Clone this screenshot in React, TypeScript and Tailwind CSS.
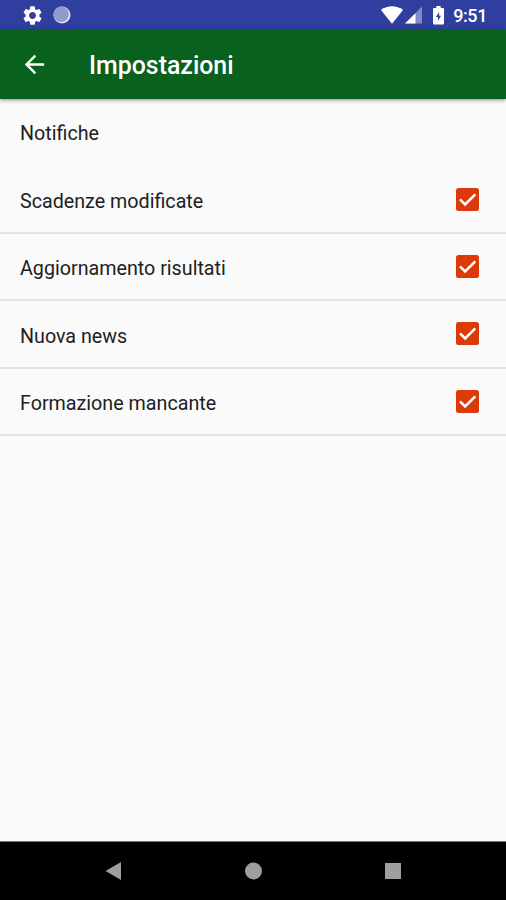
import { MdArrowBack, MdSettings } from 'react-icons/md';

const notifications = [
  { name: 'Scadenze modificate', checked: true },
  { name: 'Aggiornamento risultati', checked: true },
  { name: 'Nuova news', checked: true },
  { name: 'Formazione mancante', checked: true },
];

function StatusBar() {
  return (
    <div className="flex h-[30px] shrink-0 items-center bg-[#303f9f] pr-[19px] pl-[21px] text-white">
      <MdSettings className="h-[23px] w-[23px]" />
      <svg className="ml-[9px] h-[18px] w-[18px]" viewBox="0 0 18 18">
        <circle cx="9" cy="9" r="8.5" fill="#dfe2f3" />
        <circle cx="8.2" cy="8.2" r="7.7" fill="#929bce" />
      </svg>

      <svg className="ml-auto h-[18px] w-[22px]" viewBox="0 0 22 18" fill="currentColor">
        <path d="M0 4C6.2-1 15.800-1 22 4L11 17.700z" />
      </svg>
      <svg className="ml-[2px] h-[18px] w-[17px]" viewBox="0 0 17 18" fill="currentColor">
        <path d="M17 .5v17H0z" opacity=".4" />
        <path d="M10.500 7.200v10.300H0z" />
      </svg>
      <svg className="ml-[11px] h-[19px] w-[11px]" viewBox="0 0 11 19">
        <path
          d="M3.300 0h4.400v2H10a1 1 0 0 1 1 1v14.500a1 1 0 0 1-1 1H1a1 1 0 0 1-1-1V3a1 1 0 0 1 1-1h2.300z"
          fill="#fff"
        />
        <path d="M6.100 6L3 11h2v3.700L8 9.700H6.100z" fill="#303f9f" />
      </svg>
      <span className="ml-[9px] pt-[2px] text-[18px] leading-none font-medium tracking-[-0.4px]">9:51</span>
    </div>
  );
}

function AppBar() {
  return (
    <header className="z-10 flex h-[68.5px] shrink-0 items-center bg-[#08611d] pl-5 text-white shadow-[0_1px_4px_rgba(0,0,0,0.45)]">
      <button aria-label="Indietro">
        <MdArrowBack className="h-[29px] w-[29px]" />
      </button>
      <h1 className="ml-10 pt-1 text-[24.9px] leading-none font-medium">Impostazioni</h1>
    </header>
  );
}

function Checkbox({ checked }: { checked: boolean }) {
  return (
    <svg className="h-[23px] w-[23px]" viewBox="0 0 23 23" fill="none" role="checkbox" aria-checked={checked}>
      <rect width="23" height="23" rx="2.5" fill="#dd3a0a" />
      {checked && <path d="M4 11.300l5.100 5.200L19.300 6.300" stroke="#fff" strokeWidth="2.500" />}
    </svg>
  );
}

function NavigationBar() {
  return (
    <nav className="flex h-[59px] shrink-0 items-center border-t border-[#777] bg-black pr-[105px] pl-[105px] text-[#9e9e9e]">
      <svg className="h-[18px] w-[17px]" viewBox="0 0 17 18" fill="currentColor">
        <path d="M16 0v18L.5 9z" />
      </svg>
      <svg className="mx-auto h-[18px] w-[18px]" viewBox="0 0 18 18" fill="currentColor">
        <circle cx="8.500" cy="9" r="8.500" />
      </svg>
      <div className="h-4 w-4 bg-[#9e9e9e]" />
    </nav>
  );
}

export default function App() {
  return (
    <div className="flex h-[900px] w-[506px] flex-col overflow-hidden bg-[#fafafa] font-['Roboto',sans-serif]">
      <StatusBar />
      <AppBar />

      <main className="flex-1 text-[19.7px] leading-none text-[#212121]">
        <h2 className="flex h-[68px] items-center pt-[3px] pl-5">Notifiche</h2>
        <ul>
          {notifications.map((item) => (
            <li
              key={item.name}
              className="flex h-[67.4px] items-center justify-between border-b-2 border-[#e2e2e2] pr-[27px] pl-5"
            >
              <span className="pt-[5px]">{item.name}</span>
              <Checkbox checked={item.checked} />
            </li>
          ))}
        </ul>
      </main>

      <NavigationBar />
    </div>
  );
}
